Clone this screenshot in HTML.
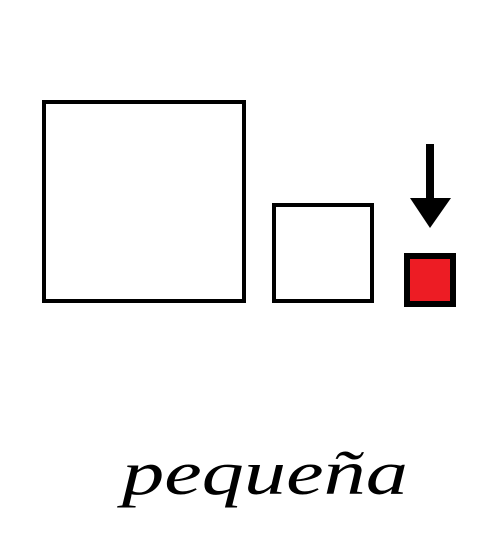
<!DOCTYPE html>
<html><head><style>
html,body{margin:0;padding:0;background:#fff;width:500px;height:535px;overflow:hidden}
</style></head><body>
<svg width="500" height="535" viewBox="0 0 500 535" xmlns="http://www.w3.org/2000/svg">
<rect x="44" y="102" width="200" height="199" fill="none" stroke="#000" stroke-width="4"/>
<rect x="274" y="205" width="98" height="96" fill="none" stroke="#000" stroke-width="4"/>
<rect x="407" y="256" width="46" height="48" fill="#ed1c24" stroke="#000" stroke-width="6"/>
<rect x="426" y="144" width="8" height="56" fill="#000"/>
<polygon points="410,198 451,198 430,228" fill="#000"/>
<text x="122" y="494" font-family="Liberation Serif, serif" font-style="italic" font-size="62" textLength="286" lengthAdjust="spacingAndGlyphs" fill="#000">pequeña</text>
</svg>
</body></html>
